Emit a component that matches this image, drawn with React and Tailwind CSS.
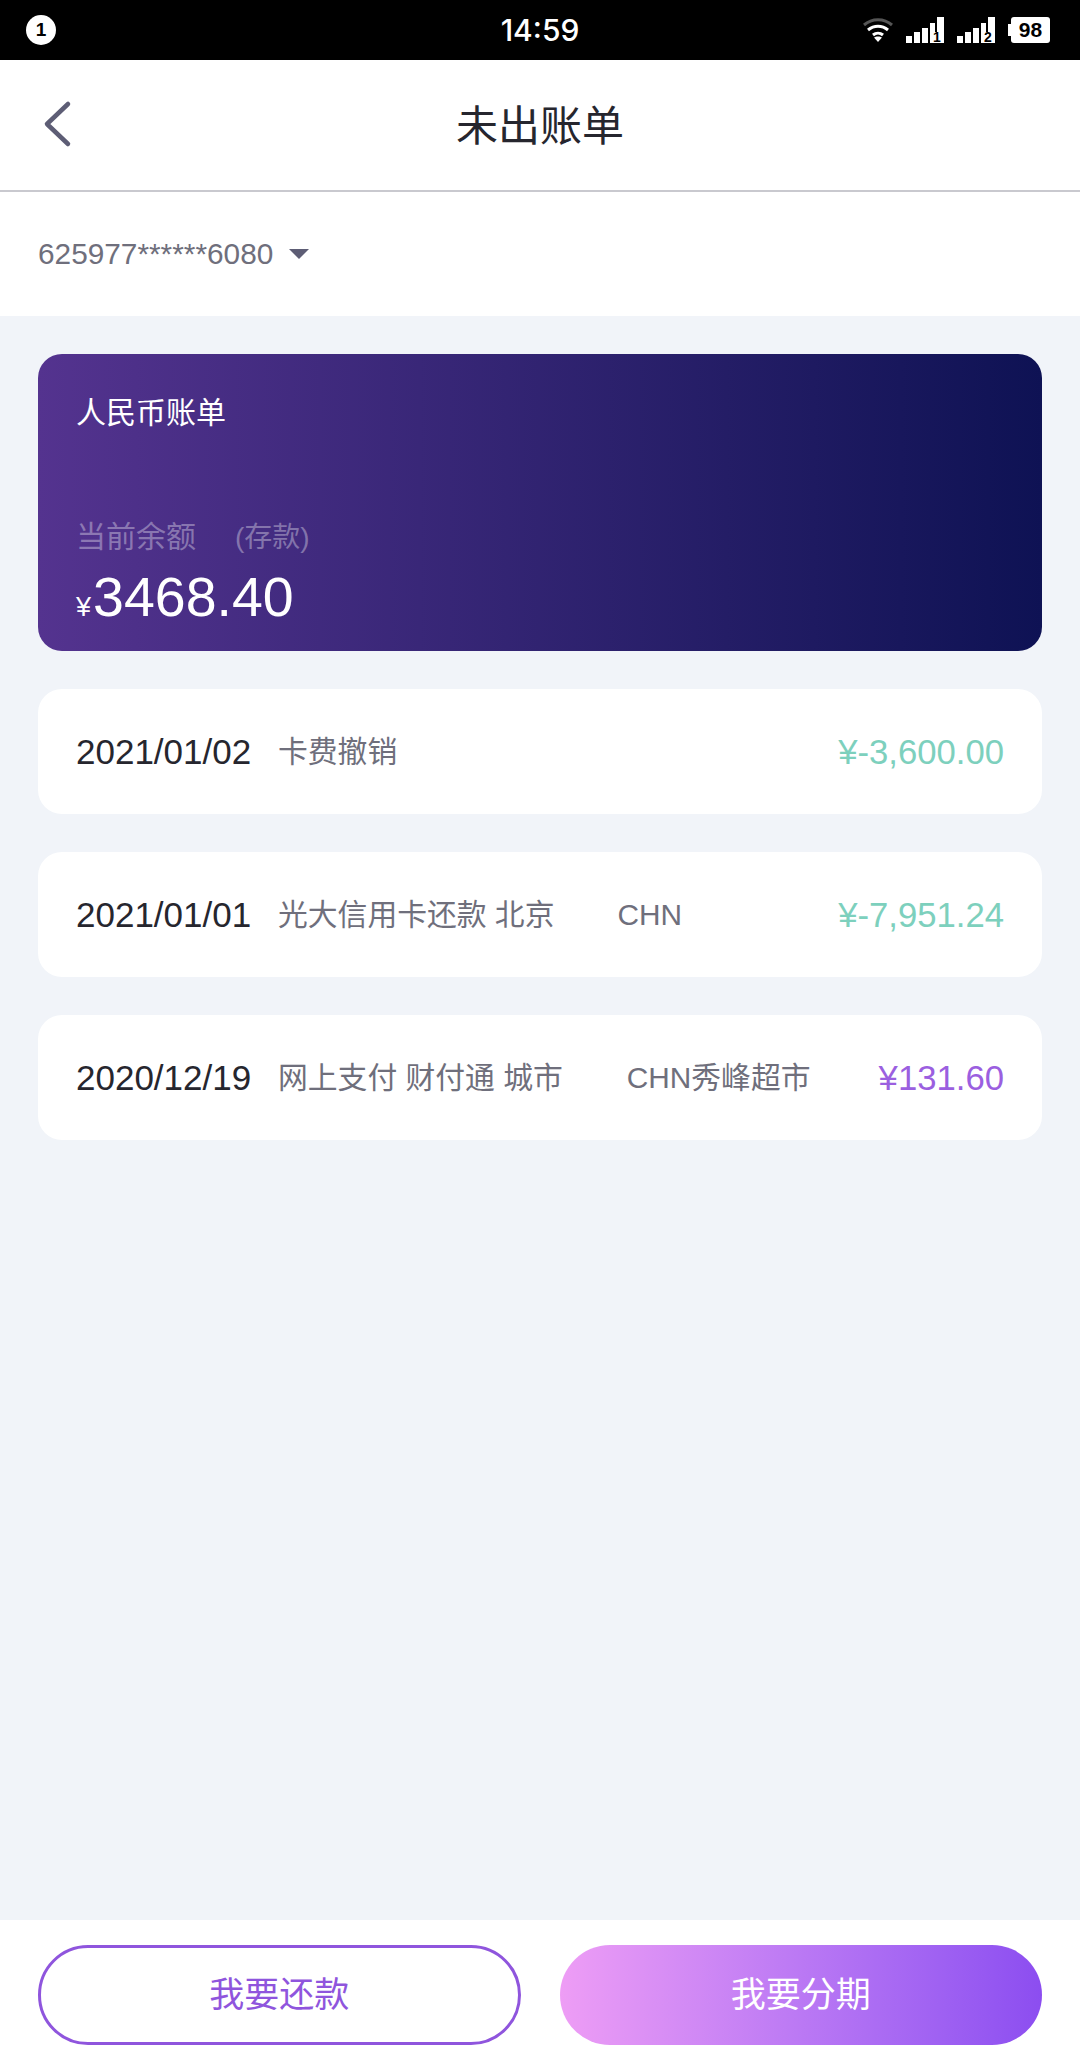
const rows = [
  { date: "2021/01/02", desc: "卡费撤销", extra: "", amount: "¥-3,600.00", color: "text-[#7dd0bd]", gap: "" },
  { date: "2021/01/01", desc: "光大信用卡还款 北京", extra: "CHN", amount: "¥-7,951.24", color: "text-[#7dd0bd]", gap: "ml-[63px]" },
  { date: "2020/12/19", desc: "网上支付 财付通 城市", extra: "CHN秀峰超市", amount: "¥131.60", color: "text-[#9b5fe0]", gap: "ml-[64px]" },
]

function Signal({ n }) {
  return (
    <svg width="38" height="27" viewBox="0 0 38 27" fill="white">
      <path d="M0 19h6v7H0zM8 15h6v11H8zM16 11h6v15h-6zM24 6h5v9h-5zM31 0h7v26h-14v-11h7z" />
      <text x="31" y="25" textAnchor="middle" fontSize="14" fontWeight="700" fill="black" fontFamily="'Liberation Sans'">{n}</text>
    </svg>
  )
}

export default function App() {
  return (
    <div className="w-[1080px] h-[2060px] flex flex-col bg-[#f1f4f9] font-['Liberation_Sans','Noto_Sans_CJK_SC',sans-serif] overflow-hidden">
      {/* status bar */}
      <div className="h-[60px] bg-black grid grid-cols-3 items-center px-[26px] text-white">
        <div className="w-[30px] h-[30px] rounded-full bg-white text-black text-[19px] font-bold flex items-center justify-center">1</div>
        <div className="text-[30px] font-medium text-center font-['Inter']">14:59</div>
        <div className="flex items-center justify-end gap-[13px] mr-[4px]">
          <svg width="30" height="26" viewBox="0 0 30 26" fill="none" strokeWidth="3">
            <path d="M1 8c8-7 20-7 28 0" stroke="#555" />
            <path d="M5 13c6-5 14-5 20 0M10 18c3-2.500 7-2.500 10 0" stroke="white" />
            <path d="M15 25l-4-4.500c2-1.500 6-1.500 8 0z" fill="white" stroke="none" />
          </svg>
          <Signal n="1" />
          <Signal n="2" />
          <div className="flex items-center">
            <div className="w-[3px] h-[12px] bg-white" />
            <div className="w-[39px] h-[26px] bg-white rounded-[3px] text-black text-[21px] font-bold leading-[26px] text-center">98</div>
          </div>
        </div>
      </div>

      {/* header */}
      <div className="h-[132px] bg-white border-b-2 border-[#c9c9cf] flex items-center justify-center relative">
        <svg className="absolute left-[42px] top-[40px]" width="30" height="48" viewBox="0 0 30 48" fill="none" stroke="#5d5d75" strokeWidth="4.500" strokeLinecap="round" strokeLinejoin="round">
          <path d="M26 4 5 24l21 20" />
        </svg>
        <div className="text-[42px] text-[#26262e] pt-[2px]">未出账单</div>
      </div>

      <div className="h-[124px] bg-white flex items-center px-[38px] text-[29.8px] text-[#6f6f7c]">
        625977******6080
        <span className="ml-[16px] w-0 h-0 border-x-[10px] border-x-transparent border-t-[10px] border-t-[#5d5d75]" />
      </div>

      <div className="flex-1 px-[38px] pt-[38px] flex flex-col gap-[38px]">
        <div className="h-[297px] rounded-[24px] bg-linear-to-r from-[#54338f] to-[#0e1254] px-[38px] pt-[41px] text-white">
          <div className="text-[30px] leading-[36px]">人民币账单</div>
          <div className="mt-[88px] text-[30px] leading-[36px] text-white/35">当前余额<span className="ml-[39px] text-[28px]">(存款)</span></div>
          <div className="text-[55.5px] leading-[64px] mt-[9px]"><span className="text-[27px] mr-[2px]">¥</span>3468.40</div>
        </div>

        {rows.map(r => (
          <div key={r.date} className="h-[125px] rounded-[24px] bg-white px-[38px] pt-[2px] flex items-center">
            <div className="text-[35px] text-[#26262e] w-[202px]">{r.date}</div>
            <div className="text-[29.8px] text-[#6f6f7c]">{r.desc}</div>
            {r.extra && <div className={`text-[29.8px] text-[#6f6f7c] ${r.gap}`}>{r.extra}</div>}
            <div className={`ml-auto text-[34.7px] ${r.color}`}>{r.amount}</div>
          </div>
        ))}
      </div>

      {/* bottom buttons */}
      <div className="h-[140px] bg-white px-[38px] pt-[25px] grid grid-cols-2 gap-[39px] items-start">
        <div className="h-[100px] rounded-full border-[3px] border-[#8f55dd] flex items-center justify-center text-[35px] text-[#8f55dd]">我要还款</div>
        <div className="h-[100px] rounded-full bg-linear-to-r from-[#ee9df5] to-[#8c4df0] flex items-center justify-center text-[35px] text-white">我要分期</div>
      </div>
    </div>
  )
}
